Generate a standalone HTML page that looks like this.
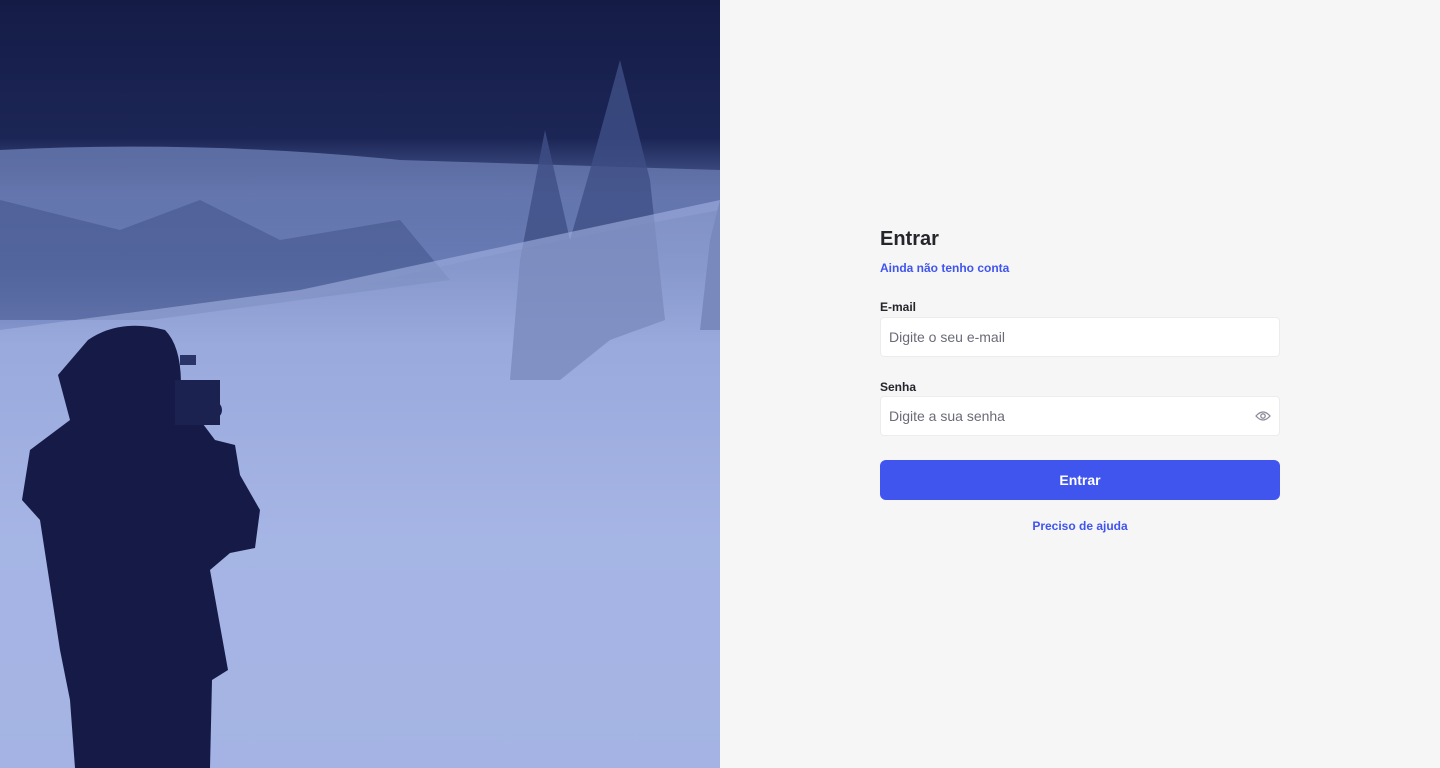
<!DOCTYPE html>
<html><head><meta charset="utf-8"><style>
*{margin:0;padding:0;box-sizing:border-box}
body{width:1440px;height:768px;overflow:hidden;background:#f6f6f6;font-family:"Liberation Sans",sans-serif;position:relative}
.left{position:absolute;left:0;top:0;width:720px;height:768px;overflow:hidden}
.form{position:absolute;left:880px;top:226px;width:400px}
h1{font-size:20px;font-weight:600;color:#25252b;line-height:26px}
.link{color:#4054ee;font-size:12px;font-weight:bold}
.lab{font-size:12px;color:#25252b;font-weight:bold;margin-bottom:4px}
.inp{height:40px;background:#fff;border:1px solid #ececec;border-radius:4px;padding:0 8px;font-size:14px;color:#6b6b78;line-height:38px;position:relative}
.btn{height:40px;background:#4054ee;border-radius:6px;color:#fff;font-size:14px;font-weight:bold;text-align:center;line-height:40px}
</style></head><body>
<div class="left">
<svg width="720" height="768" viewBox="0 0 720 768">
<defs>
<linearGradient id="bg" x1="0" y1="0" x2="0" y2="1">
<stop offset="0" stop-color="#141c46"/><stop offset="0.18" stop-color="#1c2656"/>
<stop offset="0.25" stop-color="#4c5d95"/><stop offset="0.35" stop-color="#5e72ad"/>
<stop offset="0.45" stop-color="#8c9dd3"/><stop offset="0.7" stop-color="#a9b8e6"/><stop offset="1" stop-color="#a6b5e3"/>
</linearGradient>
<linearGradient id="mist" x1="0" y1="0" x2="0" y2="1">
<stop offset="0" stop-color="#6a7cb4" stop-opacity="0.8"/><stop offset="1" stop-color="#8ea0d5" stop-opacity="0"/>
</linearGradient>
</defs>
<rect width="720" height="768" fill="url(#bg)"/>
<path d="M0 150 Q200 140 400 160 L720 170 L720 210 Q500 250 300 300 Q150 320 0 330Z" fill="url(#mist)"/>
<path d="M0 200 L120 230 L200 200 L280 240 L400 220 L450 280 L300 300 L150 320 L0 320Z" fill="#3e4f86" opacity="0.5"/>
<path d="M510 380 L520 260 L545 130 L570 240 L590 170 L620 60 L650 180 L665 320 L610 340 L560 380Z" fill="#3e4f86" opacity="0.8"/>
<path d="M700 330 L710 240 L720 200 L720 330Z" fill="#3d4d84"/>
<path d="M300 290 L720 200 L720 768 L0 768 L0 330Z" fill="#a4b3e3" opacity="0.6"/>
<path d="M88 340 Q120 318 165 330 Q185 350 180 405 L200 420 L215 440 L235 445 L240 475 L260 510 L255 548 L230 553 L210 570 L228 670 L212 680 L210 768 L75 768 L70 700 L60 650 L40 520 L22 500 L30 450 L70 420 L58 375Z" fill="#151b46"/>
<rect x="175" y="380" width="45" height="45" fill="#1b2250"/>
<circle cx="213" cy="410" r="9" fill="#1b2250"/>
<rect x="180" y="355" width="16" height="10" fill="#2a3468"/>
</svg>
</div>
<div class="form">
<h1>Entrar</h1>
<div class="link" style="margin-top:9px">Ainda não tenho conta</div>
<div class="lab" style="margin-top:25px;margin-bottom:3px">E-mail</div>
<div class="inp">Digite o seu e-mail</div>
<div class="lab" style="margin-top:23px;margin-bottom:2px">Senha</div>
<div class="inp">Digite a sua senha
<svg style="position:absolute;right:8px;top:12px" width="16" height="14" viewBox="0 0 16 14"><path d="M1 7 Q8 -1 15 7 Q8 15 1 7Z" fill="none" stroke="#8a8a99" stroke-width="1.3"/><circle cx="8" cy="7" r="2.2" fill="none" stroke="#8a8a99" stroke-width="1.3"/></svg></div>
<div class="btn" style="margin-top:24px">Entrar</div>
<div class="link" style="text-align:center;margin-top:19px">Preciso de ajuda</div>
</div>
</body></html>
